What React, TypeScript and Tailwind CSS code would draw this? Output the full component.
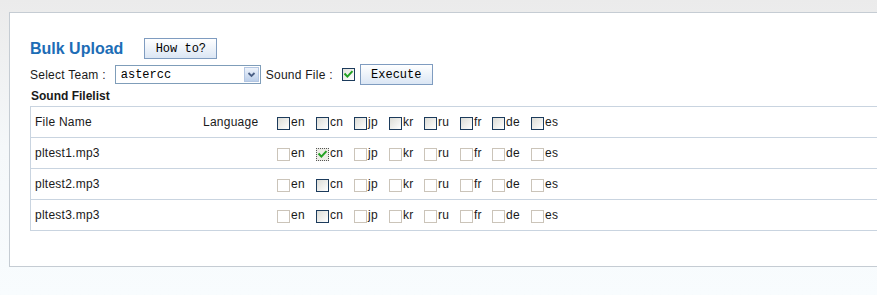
import React from "react";

const LANGS: { code: string; w: string }[] = [
  { code: "en", w: "w-[39px]" },
  { code: "cn", w: "w-[38px]" },
  { code: "jp", w: "w-[35px]" },
  { code: "kr", w: "w-[35px]" },
  { code: "ru", w: "w-[36px]" },
  { code: "fr", w: "w-[32px]" },
  { code: "de", w: "w-[39px]" },
  { code: "es", w: "w-[39px]" },
];

type BoxKind = "header" | "disabled" | "enabled" | "checkedFocus" | "checked";

function Check() {
  return (
    <svg width="11" height="11" viewBox="0 0 11 11" className="block">
      <path d="M2.2 5.2 L4.4 7.6 L8.8 2.8" fill="none" stroke="#21a121" strokeWidth="2" strokeLinecap="square" />
    </svg>
  );
}

function Box({ kind }: { kind: BoxKind }) {
  if (kind === "disabled") {
    return <span className="block w-[13px] h-[13px] mt-[2px] border border-[#cbc4b9] bg-white shrink-0" />;
  }
  if (kind === "checkedFocus") {
    return (
      <span className="flex items-center justify-center w-[13px] h-[13px] mt-[2px] border border-dotted border-[#555] bg-[#ecece6] shrink-0">
        <Check />
      </span>
    );
  }
  if (kind === "checked") {
    return (
      <span className="flex items-center justify-center w-[13px] h-[13px] border border-[#1c3b5c] bg-gradient-to-br from-[#e2e2dc] to-white shrink-0">
        <Check />
      </span>
    );
  }
  return (
    <span className="block w-[13px] h-[13px] mt-[2px] border border-[#1c3b5c] bg-gradient-to-br from-[#dcdcd6] to-white shrink-0" />
  );
}

function LangCell({ kinds }: { kinds: BoxKind[] }) {
  return (
    <div className="flex items-center">
      {LANGS.map((l, i) => (
        <div key={l.code} className={`${l.w} flex items-center shrink-0`}>
          <Box kind={kinds[i]} />
          <span className="ml-[1px]">{l.code}</span>
        </div>
      ))}
    </div>
  );
}

const mono = { fontFamily: '"Liberation Mono", "DejaVu Sans Mono", monospace' };

export default function App() {
  const headerKinds: BoxKind[] = Array(8).fill("header");
  const rows: { name: string; kinds: BoxKind[] }[] = [
    { name: "pltest1.mp3", kinds: ["disabled", "checkedFocus", "disabled", "disabled", "disabled", "disabled", "disabled", "disabled"] },
    { name: "pltest2.mp3", kinds: ["disabled", "enabled", "disabled", "disabled", "disabled", "disabled", "disabled", "disabled"] },
    { name: "pltest3.mp3", kinds: ["disabled", "enabled", "disabled", "disabled", "disabled", "disabled", "disabled", "disabled"] },
  ];

  return (
    <div
      className="w-full h-[295px] overflow-hidden bg-gradient-to-b from-[#ebebeb] via-[#f5f8fa] to-[#f8fcfe] pt-[12px] pl-[9px] text-[#1a1a1a]"
      style={{ fontFamily: '"Liberation Sans", Arial, sans-serif' }}
    >
      <div className="w-[1000px] bg-white border border-[#c5ccd3] pt-[25px] pl-[20px] pb-[35px]">
        {/* Title row */}
        <div className="flex items-center h-[21px]">
          <span className="text-[16px] font-bold text-[#1d6db6] leading-none">Bulk Upload</span>
          <button
            className="ml-[21px] w-[73px] h-[21px] border border-[#7f9cc0] bg-gradient-to-b from-white to-[#dbe6f4] text-[12px] text-black flex items-center justify-center"
            style={mono}
          >
            How to?
          </button>
        </div>

        {/* Select row */}
        <div className="flex items-center h-[21px] mt-[5px] text-[12px] tracking-[0.25px]">
          <span>Select Team :</span>
          <div className="ml-[9px] w-[146px] h-[19px] border border-[#7f9db9] bg-white flex items-center justify-between pl-[5px] pr-[1px]">
            <span className="text-[12px] tracking-normal text-black" style={mono}>astercc</span>
            <span className="w-[15px] h-[15px] border border-[#b3c6e2] bg-gradient-to-b from-[#eef3fb] to-[#bccfea] flex items-center justify-center">
              <svg width="11" height="11" viewBox="0 0 11 11" className="block">
                <path d="M2.5 4 L5.5 7 L8.5 4" fill="none" stroke="#4a5f85" strokeWidth="1.8" />
              </svg>
            </span>
          </div>
          <span className="ml-[5px]">Sound File :</span>
          <span className="ml-[9px]">
            <Box kind="checked" />
          </span>
          <button
            className="ml-[5px] w-[73px] h-[21px] border border-[#7f9cc0] bg-gradient-to-b from-white to-[#dbe6f4] text-[12px] tracking-normal text-black flex items-center justify-center"
            style={mono}
          >
            Execute
          </button>
        </div>

        {/* Section label */}
        <div className="mt-[4px] mb-[3px] text-[12px] font-bold leading-[14px] ml-[1px]">Sound Filelist</div>

        {/* Table */}
        <div className="border-l border-t border-[#c9d4e0] text-[12px] tracking-[0.25px]">
          <div className="flex items-center h-[31px] border-b border-[#c9d4e0]">
            <div className="w-[172px] pl-[4px] shrink-0">File Name</div>
            <div className="w-[74px] shrink-0">Language</div>
            <LangCell kinds={headerKinds} />
          </div>
          {rows.map((r) => (
            <div key={r.name} className="flex items-center h-[31px] border-b border-[#c9d4e0]">
              <div className="w-[172px] pl-[4px] shrink-0">{r.name}</div>
              <div className="w-[74px] shrink-0" />
              <LangCell kinds={r.kinds} />
            </div>
          ))}
        </div>
      </div>
    </div>
  );
}
